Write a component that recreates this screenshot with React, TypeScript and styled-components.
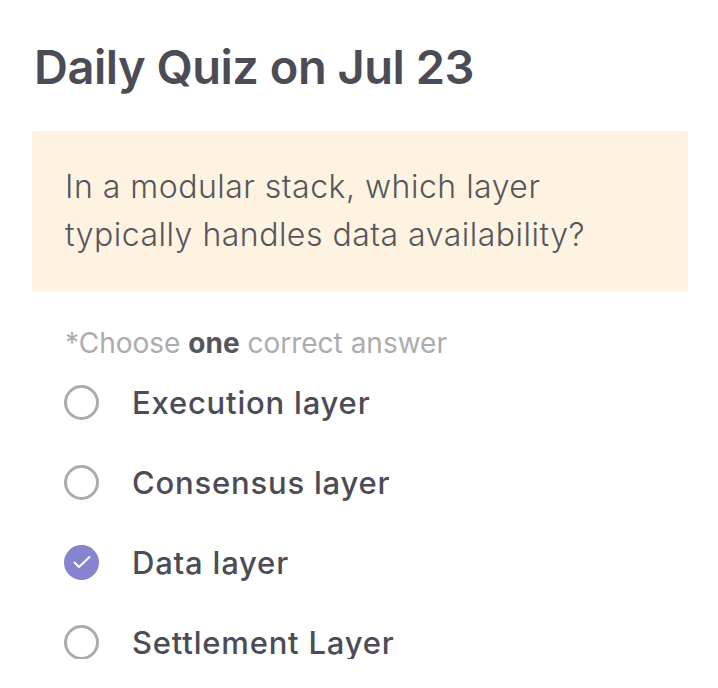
import React, { useState } from "react";
import styled, { createGlobalStyle } from "styled-components";

const GlobalStyle = createGlobalStyle`
    html, body {
        margin: 0;
        padding: 0;
        background: #ffffff;
    }
    body {
        font-family: Inter, "Noto Sans", sans-serif;
    }
`;

type Option = {
    id: number;
    label: string;
};

const options: Option[] = [
    { id: 1, label: "Execution layer" },
    { id: 2, label: "Consensus layer" },
    { id: 3, label: "Data layer" },
    { id: 4, label: "Settlement Layer" },
];

export default function App() {
    const [selected, setSelected] = useState<number>(3);
    return (
        <>
            <GlobalStyle />
            <Style_page>
                <Style_title>Daily Quiz on Jul 23</Style_title>
                <Style_question>
                    In a modular stack, which layer typically handles data availability?
                </Style_question>
                <Style_hint>
                    *Choose <b>one</b> correct answer
                </Style_hint>
                <Style_list>
                    {options.map((opt) => (
                        <Style_option key={opt.id} onClick={() => setSelected(opt.id)}>
                            <Style_radio $checked={selected === opt.id}>
                                {selected === opt.id && (
                                    <svg width="24" height="24" viewBox="0 0 24 24" fill="none">
                                        <path
                                            d="M4.5 12.5l4.5 4.5L19.5 7"
                                            stroke="#ffffff"
                                            strokeWidth="2"
                                            strokeLinecap="round"
                                            strokeLinejoin="round"
                                        />
                                    </svg>
                                )}
                            </Style_radio>
                            <Style_label>{opt.label}</Style_label>
                        </Style_option>
                    ))}
                </Style_list>
            </Style_page>
        </>
    );
}

const Style_page = styled.div`
    padding: 32px 30px 0 32px;
    color: #4b4c56;
`;

const Style_title = styled.h1`
    margin: 0 0 0 2px;
    font-size: 47px;
    line-height: 70px;
    font-weight: 600;
    letter-spacing: -0.5px;
    color: #4b4c56;
`;

const Style_question = styled.div`
    margin-top: 29px;
    background: #fef3e1;
    border-radius: 3px;
    padding: 32px 80px 33px 33px;
    font-size: 32px;
    font-weight: 300;
    line-height: 48px;
    letter-spacing: 0.5px;
    color: #55565c;
`;

const Style_hint = styled.div`
    margin: 33px 0 0 33px;
    font-size: 28px;
    line-height: 36px;
    color: #acacae;
    b {
        font-weight: 700;
        color: #55565c;
    }
`;

const Style_list = styled.div`
    margin: 24px 0 0 32px;
    display: flex;
    flex-direction: column;
    gap: 46px;
`;

const Style_option = styled.div`
    display: flex;
    align-items: center;
    gap: 33px;
    height: 34px;
    cursor: pointer;
`;

const Style_radio = styled.span<{ $checked: boolean }>`
    box-sizing: border-box;
    width: 35px;
    height: 35px;
    border-radius: 50%;
    flex-shrink: 0;
    display: flex;
    align-items: center;
    justify-content: center;
    border: ${({ $checked }) => ($checked ? "none" : "3px solid #ababab")};
    background: ${({ $checked }) => ($checked ? "#8684d1" : "transparent")};
`;

const Style_label = styled.span`
    font-size: 31px;
    font-weight: 500;
    letter-spacing: 0.8px;
    color: #4b4c56;
`;
